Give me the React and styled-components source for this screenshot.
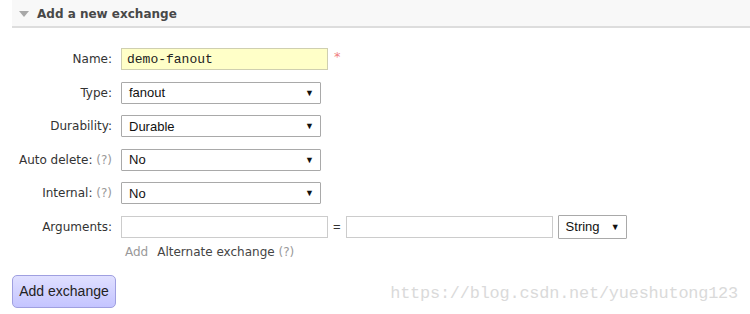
import React from "react";
import styled, { createGlobalStyle } from "styled-components";

const GlobalStyle = createGlobalStyle`
  body {
    margin: 0;
    background: #fff;
    font-family: "DejaVu Sans", Verdana, sans-serif;
    color: #333;
  }
`;

const Page = styled.div`
  position: relative;
  width: 750px;
  height: 314px;
  overflow: hidden;
`;

const Header = styled.div`
  margin-left: 12px;
  height: 24px;
  padding: 2px 0 0 7px;
  background: #f8f8f8;
  border-bottom: 2px solid #dddddd;
  display: flex;
  align-items: center;
  gap: 8px;
`;

const Arrow = styled.span`
  width: 0;
  height: 0;
  border-left: 5px solid transparent;
  border-right: 5px solid transparent;
  border-top: 6px solid #a8a8a8;
`;

const Title = styled.h2`
  margin: 0;
  font-size: 12px;
  font-weight: bold;
  color: #484848;
`;

const Form = styled.div`
  padding: 20px 0 0 12px;
  display: grid;
  grid-template-columns: 100px auto;
  grid-template-rows: repeat(6, 22px) auto;
  column-gap: 9px;
  row-gap: 11.6px;
  align-items: center;
  justify-items: start;
`;

const Label = styled.label`
  justify-self: end;
  font-size: 12px;
  color: #333;
  white-space: nowrap;
`;

const Help = styled.span`
  color: #999;
`;

const Controls = styled.div`
  display: flex;
  align-items: center;
  gap: ${(p) => p.$gap || 5}px;
`;

const TextInput = styled.div`
  box-sizing: border-box;
  width: 207px;
  height: 22px;
  border: 1px solid ${(p) => (p.$highlight ? "#cfcfb0" : "#cccccc")};
  background: ${(p) => (p.$highlight ? "#ffffc8" : "#fff")};
  display: flex;
  align-items: center;
  padding-left: 5px;
  font-family: "Liberation Mono", "Courier New", monospace;
  font-size: 13px;
  color: #222;
`;

const Required = styled.span`
  color: #f08080;
  font-size: 13px;
  align-self: flex-start;
  margin-top: 1px;
`;

const Select = styled.div`
  box-sizing: border-box;
  width: ${(p) => p.$width}px;
  height: ${(p) => p.$height || 22}px;
  border: 1px solid #a9a9a9;
  border-radius: 1px;
  background: #fff;
  display: flex;
  align-items: center;
  justify-content: space-between;
  padding: 0 6px 0 7px;
  font-family: "Liberation Sans", Arial, sans-serif;
  font-size: 13px;
  color: #111;
`;

const Caret = styled.span`
  font-size: 9px;
  color: #111;
`;

const Equals = styled.span`
  font-family: "Liberation Sans", Arial, sans-serif;
  font-size: 13px;
  color: #333;
`;

const Links = styled.div`
  display: flex;
  gap: 9px;
  padding-left: 4px;
  font-size: 12px;
  line-height: 14px;
  margin-top: -5px;
`;

const AddLink = styled.span`
  color: #999;
`;

const Alternate = styled.span`
  color: #444;
`;

const Button = styled.button`
  display: block;
  margin: 16px 0 0 12px;
  width: 104px;
  height: 33px;
  border: 1px solid #9f9fe0;
  border-radius: 5px;
  background: linear-gradient(#e0e0ff, #c4c4ff);
  font-family: "Liberation Sans", Arial, sans-serif;
  font-size: 14px;
  color: #222;
  padding: 0;
`;

const Watermark = styled.div`
  position: absolute;
  right: 12px;
  bottom: 11px;
  font-family: "Liberation Mono", monospace;
  font-size: 16.9px;
  color: #dadada;
  letter-spacing: -0.2px;
`;

function Dropdown({ value, width, height }) {
  return (
    <Select $width={width} $height={height}>
      <span>{value}</span>
      <Caret>▼</Caret>
    </Select>
  );
}

export default function App() {
  return (
    <Page>
      <GlobalStyle />
      <Header>
        <Arrow />
        <Title>Add a new exchange</Title>
      </Header>
      <Form>
        <Label>Name:</Label>
        <Controls $gap={6}>
          <TextInput $highlight>demo-fanout</TextInput>
          <Required>*</Required>
        </Controls>

        <Label>Type:</Label>
        <Dropdown value="fanout" width={200} />

        <Label>Durability:</Label>
        <Dropdown value="Durable" width={200} />

        <Label>
          Auto delete: <Help>(?)</Help>
        </Label>
        <Dropdown value="No" width={200} />

        <Label>
          Internal: <Help>(?)</Help>
        </Label>
        <Dropdown value="No" width={200} />

        <Label>Arguments:</Label>
        <Controls $gap={5}>
          <TextInput />
          <Equals>=</Equals>
          <TextInput />
          <Dropdown value="String" width={69} height={24} />
        </Controls>

        <span />
        <Links>
          <AddLink>Add</AddLink>
          <Alternate>
            Alternate exchange <Help>(?)</Help>
          </Alternate>
        </Links>
      </Form>
      <Button>Add exchange</Button>
      <Watermark>https://blog.csdn.net/yueshutong123</Watermark>
    </Page>
  );
}
